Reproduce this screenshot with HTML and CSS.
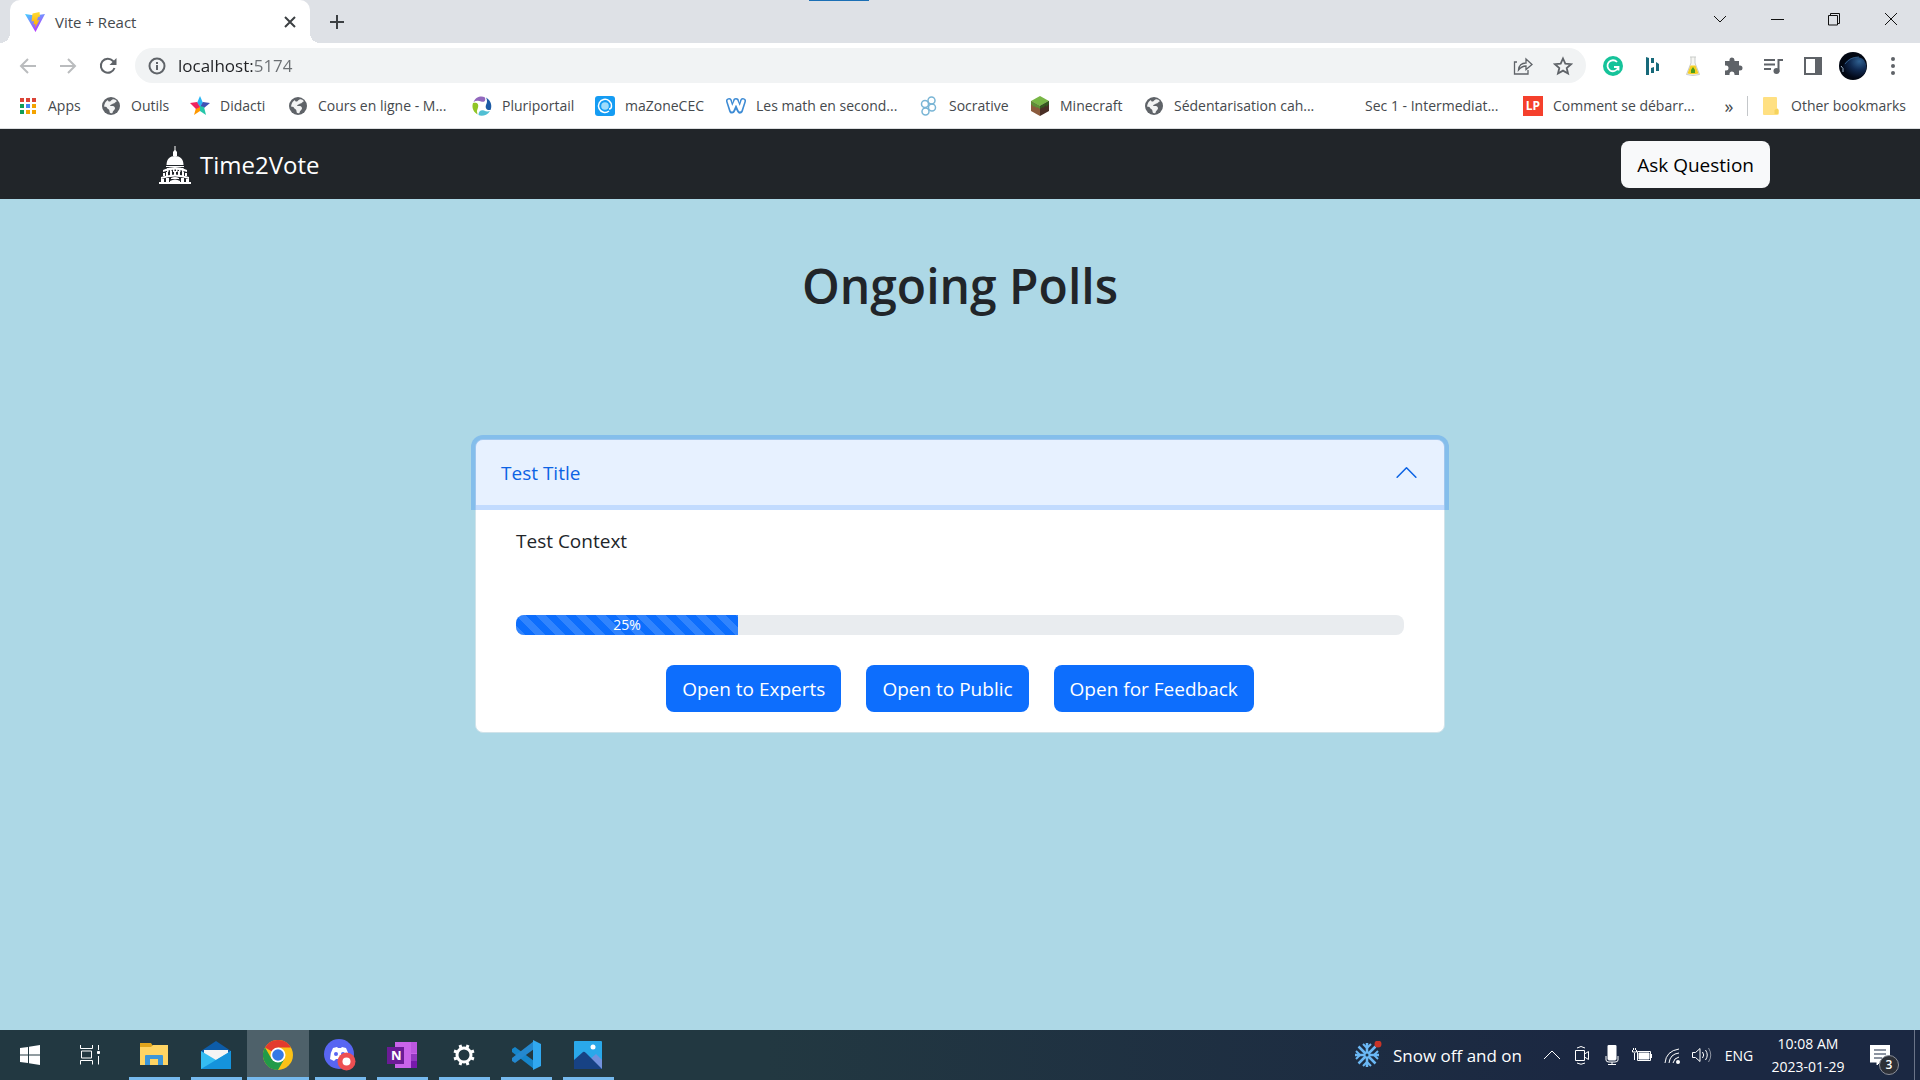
FILE: index.html
```
<!DOCTYPE html>
<html lang="en">
<head>
    <meta charset="UTF-8">
    <meta name="viewport" content="width=device-width, initial-scale=1.0">
    <title>Vite + React</title>
    <link rel="stylesheet" href="styles.css">
</head>
<body>
    <!-- Shared icons -->
    <svg class="sprite" aria-hidden="true">
        <symbol id="globe" viewBox="0 0 20 20">
            <circle cx="10" cy="10" r="9" fill="#5f6368"/>
            <path d="M11.500 3.500C13 3 15 4 16 5.500C14 5.500 14.500 7.500 12 7.500C11 9 9.500 8 9 10C11 10 13.500 9.500 14 12C14 14 12 14 11.500 17C9.500 17.500 8.500 17 8.500 15C8.500 13 6 13 5.500 11L3 10.500C3.500 7 5 5 7 4C7 6 9.500 6 10 4.500Z" fill="#fff" opacity=".92"/>
        </symbol>
    </svg>

    <!-- Tab strip -->
    <header class="tab-strip">
        <span class="drag-hint"></span>
        <div class="tab">
            <svg width="20" height="20" viewBox="0 0 20 20">
                <defs>
                    <linearGradient id="viteBack" x1="0" y1="0" x2=".6" y2="1"><stop stop-color="#41d1ff"/><stop offset="1" stop-color="#bd34fe"/></linearGradient>
                    <linearGradient id="viteBolt" x1="0" y1="0" x2="0" y2="1"><stop stop-color="#ffdd35"/><stop offset="1" stop-color="#ffa800"/></linearGradient>
                </defs>
                <path d="M0 2L10 3.500L20 2L10.500 20Z" fill="url(#viteBack)"/>
                <path d="M14.500 0L7.500 1.500L6.500 9.500L9 9L8.500 12.500L10.500 12L10 16L14.500 8L12 8.500L13 5L15 4.500Z" fill="url(#viteBolt)"/>
            </svg>
            <span class="tab-title">Vite + React</span>
            <button class="icon-button" aria-label="Close tab">
                <svg width="12" height="12" viewBox="0 0 12 12"><path d="M1 1L11 11M11 1L1 11" stroke="#3c4043" stroke-width="2"/></svg>
            </button>
        </div>
        <button class="icon-button new-tab" aria-label="New tab">
            <svg width="16" height="16" viewBox="0 0 16 16"><path d="M8 1V15M1 8H15" stroke="#3c4043" stroke-width="2"/></svg>
        </button>
        <div class="window-buttons">
            <button aria-label="Search tabs"><svg width="14" height="14" viewBox="0 0 14 14"><path d="M1 4L7 10L13 4"/></svg></button>
            <button aria-label="Minimize"><svg width="14" height="14" viewBox="0 0 14 14"><path d="M1 7.500H14"/></svg></button>
            <button aria-label="Restore"><svg width="14" height="14" viewBox="0 0 14 14"><path d="M1.500 3.500H10.500V13H1.500ZM3.500 3.500V1.500H12.500V11.500H10.500"/></svg></button>
            <button aria-label="Close"><svg width="14" height="14" viewBox="0 0 14 14"><path d="M1 1L13 13M13 1L1 13"/></svg></button>
        </div>
    </header>

    <!-- Address bar -->
    <div class="toolbar">
        <button class="tool" aria-label="Back"><svg width="18" height="18" viewBox="0 0 18 18"><path d="M17 9H2M9 2L2 9L9 16" fill="none" stroke="#babcbe" stroke-width="2"/></svg></button>
        <button class="tool" aria-label="Forward"><svg width="18" height="18" viewBox="0 0 18 18"><path d="M1 9H16M9 2L16 9L9 16" fill="none" stroke="#babcbe" stroke-width="2"/></svg></button>
        <button class="tool" aria-label="Reload"><svg width="20" height="20" viewBox="0 0 20 20"><path d="M16.500 12A7 7 0 1 1 15 5L17 7" fill="none" stroke="#5f6368" stroke-width="2"/><path d="M18.500 2V9H11.500Z" fill="#5f6368"/></svg></button>
        <div class="omnibox">
            <svg width="18" height="18" viewBox="0 0 18 18"><circle cx="9" cy="9" r="7.500" fill="none" stroke="#5f6368" stroke-width="2"/><path d="M9 8V13M9 5V7" stroke="#5f6368" stroke-width="2"/></svg>
            <input class="url" type="text" value="localhost:5174" aria-label="Address">
            <button class="icon-button" aria-label="Share"><svg width="20" height="20" viewBox="0 0 20 20"><path d="M4 6H1.500V18H15V14M5.500 14C6 9 9 7 13 7V3L19 8.500L13 13.500V10C10 10 8 11 5.500 14Z" fill="none" stroke="#5f6368" stroke-width="1.300"/></svg></button>
            <button class="icon-button" aria-label="Bookmark"><svg width="20" height="20" viewBox="0 0 20 20"><path d="M10 2.500L12.300 7.700L18 8.200L13.700 12L15 17.500L10 14.600L5 17.500L6.300 12L2 8.200L7.700 7.700Z" fill="none" stroke="#5f6368" stroke-width="1.800"/></svg></button>
        </div>
        <button class="tool" aria-label="Grammarly"><svg width="20" height="20" viewBox="0 0 20 20"><circle cx="10" cy="10" r="10" fill="#15c39a"/><path d="M14 6A5.500 5.500 0 1 0 15 12M11 11H15.500V14.500" fill="none" stroke="#fff" stroke-width="1.800"/></svg></button>
        <button class="tool" aria-label="Extension"><svg width="20" height="20" viewBox="0 0 20 20"><path d="M3 1L6 2V19H3ZM8 2H11V7H8ZM8 12L11 11V17H8ZM13 6L16 8V15H13Z" fill="#17697a"/></svg></button>
        <button class="tool" aria-label="Lab flask"><svg width="20" height="20" viewBox="0 0 20 20"><path d="M7 1H13M8 1V7L3.500 18.500Q10 20.500 16.500 18.500L12 7V1" fill="#f6f6f2" stroke="#c9ccc9"/><path d="M7.500 9.500H12.500L15.500 17.500Q10 19 4.500 17.500Z" fill="#f6cf22"/><path d="M8 17V14L10 11L12 14V17Z" fill="#4a9d1c"/></svg></button>
        <button class="tool" aria-label="Extensions"><svg width="20" height="20" viewBox="0 0 20 20"><path d="M2 5H6.500V4A2.500 2.500 0 0 1 11.500 4V5H16V9.500H17A2.500 2.500 0 0 1 17 14.500H16V19H11.500V18A2.500 2.500 0 0 0 6.500 18V19H2V14.500H3A2.500 2.500 0 0 0 3 9.500H2Z" fill="#5f6368"/></svg></button>
        <button class="tool" aria-label="Media"><svg width="20" height="20" viewBox="0 0 20 20"><path d="M1 4H12M1 8.500H12M1 13H8M15.500 16V4H20" fill="none" stroke="#5f6368" stroke-width="2"/><circle cx="13.500" cy="15" r="3" fill="#5f6368"/></svg></button>
        <button class="tool" aria-label="Side panel"><svg width="20" height="20" viewBox="0 0 20 20"><path d="M2 2H18V18H2Z" fill="none" stroke="#5f6368" stroke-width="2"/><path d="M12 2H18V18H12Z" fill="#5f6368"/></svg></button>
        <button class="tool" aria-label="Profile"><svg width="28" height="28" viewBox="0 0 28 28"><defs><radialGradient id="planet" cx=".7" cy=".2" r=".8"><stop stop-color="#2f6090"/><stop offset=".5" stop-color="#102a52"/><stop offset="1" stop-color="#020817"/></radialGradient></defs><circle cx="14" cy="14" r="14" fill="#020712"/><path d="M4 14C8 6 18 2 25 8Q29 14 26 21Q21 28 12 26Q3 22 4 14Z" fill="url(#planet)"/><path d="M2 14Q5 16 4 20" fill="none" stroke="#9fb8d0"/><path d="M6 12Q11 5 20 5" fill="none" stroke="#315a83"/></svg></button>
        <button class="tool" aria-label="Menu"><svg width="20" height="20" viewBox="0 0 20 20" fill="#5f6368"><circle cx="10" cy="3" r="2"/><circle cx="10" cy="10" r="2"/><circle cx="10" cy="17" r="2"/></svg></button>
    </div>

    <!-- Bookmarks -->
    <nav class="bookmarks">
        <div class="bookmark-list">
            <a href="#"><svg width="20" height="20" viewBox="0 0 20 20"><path d="M2 2H6V6H2ZM8 2H12V6H8ZM14 2H18V6H14Z" fill="#db4437"/><path d="M2 8H6V12H2ZM2 14H6V18H2Z" fill="#0f9d58"/><path d="M8 8H12V12H8Z" fill="#4285f4"/><path d="M14 8H18V12H14ZM8 14H12V18H8ZM14 14H18V18H14Z" fill="#f4a300"/></svg>Apps</a>
            <a href="#"><svg width="20" height="20"><use href="#globe"/></svg>Outils</a>
            <a href="#"><svg width="20" height="20" viewBox="0 0 20 20"><path d="M10 0L13 7L10 11L7 7Z" fill="#29b6f6"/><path d="M20 7L14 12L10 11L13 6Z" fill="#3f51b5"/><path d="M16 19L10 15V10L14 11Z" fill="#26c6a9"/><path d="M4 19L6 12L10 10V15Z" fill="#ff9800"/><path d="M0 7L7 6L10 11L6 13Z" fill="#ef245f"/></svg>Didacti</a>
            <a href="#"><svg width="20" height="20"><use href="#globe"/></svg>Cours en ligne - M...</a>
            <a href="#"><svg width="20" height="20" viewBox="0 0 20 20"><path d="M1.500 6C4 0 10-.5 13 1.500C14 5 12 6.500 9 5.500Q5 4 1.500 6Z" fill="#9268bd"/><path d="M14 1.500C20 5 20 11 18.500 14C14.500 14.500 13 12 14 9Q16 5 14 1.500Z" fill="#1c5ba5"/><path d="M18 15C15 20 9 20.500 6.500 19C6.500 15 9 13.500 12 14.500Q15 16 18 15Z" fill="#50bfd3"/><path d="M5.500 18.500C0 15 0 10 1 7C5 6 7 8 6 11.500Q4 15 5.500 18.500Z" fill="#91c526"/></svg>Pluriportail</a>
            <a href="#"><svg width="20" height="20" viewBox="0 0 20 20"><rect width="20" height="20" rx="3" fill="#159cf3"/><path d="M14 15A6.500 6.500 0 1 1 16.500 10Q16.500 13 14 13" fill="none" stroke="#fff" stroke-width="1.500"/><circle cx="10" cy="10" r="3.800" fill="#9fdcfb"/></svg>maZoneCEC</a>
            <a href="#"><svg width="20" height="20" viewBox="0 0 20 20"><path d="M3 5L6 14.500L10 7L14 14.500L17 5M10 5V8" fill="none" stroke="#3d8bd4" stroke-width="6" stroke-linecap="round" stroke-linejoin="round"/><path d="M3 5L6 14L10 5L14 14L17 5" fill="none" stroke="#fff" stroke-width="3" stroke-linecap="round" stroke-linejoin="round"/></svg>Les math en second...</a>
            <a href="#"><svg width="20" height="20" viewBox="0 0 20 20"><g fill="none" stroke="#79b5d5" stroke-width="1.500"><circle cx="12.500" cy="4.500" r="3.500"/><circle cx="6" cy="8" r="3.500"/><circle cx="13" cy="11.500" r="3.500"/><circle cx="6.500" cy="15.500" r="3.500"/></g></svg>Socrative</a>
            <a href="#"><svg width="20" height="20" viewBox="0 0 20 20"><path d="M1 5L10 0L19 5L10 10Z" fill="#78b646"/><path d="M1 5L10 10V20L1 15Z" fill="#8b5b3d"/><path d="M19 5L10 10V20L19 15Z" fill="#492f25"/><path d="M1 5L10 10V13L7 11V12L4 10V11L1 8Z" fill="#5d8f37"/><path d="M19 5L10 10V13L13 11V12L16 9V11L19 8Z" fill="#34591f"/></svg>Minecraft</a>
            <a href="#"><svg width="20" height="20"><use href="#globe"/></svg>Sédentarisation cah...</a>
            <a href="#"><svg width="20" height="20"></svg>Sec 1 - Intermediat...</a>
            <a href="#"><span class="lp-icon">LP</span>Comment se débarr...</a>
        </div>
        <button class="icon-button overflow" aria-label="More bookmarks">»</button>
        <a class="other" href="#"><svg width="20" height="20" viewBox="0 0 20 20"><path d="M2 2Q2 1 3 1H15Q16 1 16 2V12L18 14V17Q18 19 16 19H3Q2 19 2 18Z" fill="#ffe082"/><path d="M13.500 18V14.500Q13.500 13 15.500 13H17V18Z" fill="#f5d35d"/></svg>Other bookmarks</a>
    </nav>

    <!-- App navbar -->
    <nav class="navbar">
        <div class="navbar-inner">
            <a class="brand" href="#">
                <svg width="34" height="38" viewBox="0 0 34 38" fill="#fff">
                    <path d="M16.500 0H17.500V4L19 6V10H15V6L16.500 4Z"/>
                    <path d="M8.500 19C8.500 13 12 10 17 10S25.500 13 25.500 19Z"/>
                    <path d="M8 20H26V21H8ZM9 22H10.500V26H9ZM12 22H13.500V26H12ZM15 22H16.500V26H15ZM18 22H19.500V26H18ZM21 22H22.500V26H21ZM24 22H25.500V26H24Z"/>
                    <path d="M5 24Q17 18 29 24V26Q17 21 5 26ZM5 27H7V30H5ZM8 26H10V30H8ZM12 25H14V29H12ZM16 25H18V29H16ZM20 25H22V29H20ZM24 26H26V30H24ZM27 27H29V30H27Z"/>
                    <path d="M3 31Q17 26 31 31V33Q17 28 3 33ZM3 33H6V36H3ZM8 32H11V36H8ZM13 32Q17 30 21 32V33H13ZM23 32H26V36H23ZM28 33H31V36H28ZM12 35Q17 32 22 35V36H12ZM1 36H33V38H1Z"/>
                </svg>
                Time2Vote
            </a>
            <button class="btn btn-light">Ask Question</button>
        </div>
    </nav>

    <main>
        <h1>Ongoing Polls</h1>

        <section class="accordion">
            <button class="accordion-button" aria-expanded="true" aria-controls="poll1">
                Test Title
                <svg width="25" height="25" viewBox="0 0 16 16"><path d="M2 11L8 5L14 11" fill="none" stroke="#0c63e4" stroke-linecap="round" stroke-linejoin="round"/></svg>
            </button>
            <div class="accordion-body" id="poll1">
                <p>Test Context</p>
                <div class="progress" role="progressbar" aria-label="Votes" aria-valuenow="25" aria-valuemin="0" aria-valuemax="100">
                    <div class="progress-bar" style="width: 25%;">25%</div>
                </div>
                <div class="actions">
                    <button class="btn btn-primary">Open to Experts</button>
                    <button class="btn btn-primary">Open to Public</button>
                    <button class="btn btn-primary">Open for Feedback</button>
                </div>
            </div>
        </section>
    </main>

    <!-- Taskbar -->
    <footer class="taskbar">
        <button class="task" aria-label="Start"><svg width="20" height="20" viewBox="0 0 20 20" fill="#fff"><path d="M0 3L8 2V9.500H0ZM9 1.800L20 0V9.500H9ZM0 10.500H8V18L0 17ZM9 10.500H20V20L9 18.200Z"/></svg></button>
        <button class="task" aria-label="Task view"><svg width="20" height="20" viewBox="0 0 20 20" fill="none" stroke="#fff"><path d="M.5 0V3.500H12.500V0M.5 19.500V15.500H12.500V19.500M1.500 6H11.500V13H1.500ZM18.500 0V5M18.500 11V19.500"/><path d="M17.500 6.500H19.500V8.500H17.500Z" fill="#fff"/></svg></button>
        <button class="task open" aria-label="File Explorer"><svg width="30" height="30" viewBox="0 0 30 30"><path d="M1 3H12L14 6H28V25H1Z" fill="#e0a51d"/><path d="M1 7H12L14 5H29V25H1Z" fill="#ffd463"/><path d="M6 25V16Q6 15 7 15H23Q24 15 24 16V25H19V19H11V25Z" fill="#3d96d8"/></svg></button>
        <button class="task open" aria-label="Mail"><svg width="30" height="30" viewBox="0 0 30 30"><path d="M0 11L15 1L30 11V18H0Z" fill="#0d5ca8"/><path d="M3 10H27V20H3Z" fill="#f4f4f4"/><path d="M0 11L15 20L30 11V29H0Z" fill="#35bdf2"/><path d="M0 29L30 11V29Z" fill="#1593dc"/></svg></button>
        <button class="task open active" aria-label="Chrome"><svg width="30" height="30" viewBox="0 0 30 30"><circle cx="15" cy="15" r="15" fill="#fbc116"/><path d="M15 15L2 7.500A15 15 0 0 1 28 7.500H15Z" fill="#e33b2e"/><path d="M2 7.500A15 15 0 0 0 15 30L21.500 18.700L8.500 18.700Z" fill="#229a48"/><circle cx="15" cy="15" r="7.500" fill="#fff"/><circle cx="15" cy="15" r="5.800" fill="#3479e5"/></svg></button>
        <button class="task open" aria-label="Discord"><svg width="32" height="32" viewBox="0 0 32 32"><circle cx="15" cy="15" r="15" fill="#5865f2"/><path d="M9 9L13 8L14 9H17L18 8L22 9Q25 14 25 20L21 22L19 20H12L10 22L6 20Q6 14 9 9Z" fill="#fff"/><circle cx="12" cy="15" r="2" fill="#5865f2"/><circle cx="19" cy="15" r="2" fill="#5865f2"/><circle cx="22.500" cy="22.500" r="9" fill="#ed4f52"/><circle cx="22.500" cy="22.500" r="4" fill="#fff"/></svg></button>
        <button class="task open" aria-label="OneNote"><svg width="30" height="30" viewBox="0 0 30 30"><path d="M8 2H30V28H8Z" fill="#ca64ea"/><path d="M24 2H30V13H24Z" fill="#bb57df"/><path d="M24 14H30V21H24Z" fill="#9138bf"/><path d="M24 21H30V28H24Z" fill="#7719aa"/><rect y="7" width="17" height="17" fill="#6b1b96"/><text x="4" y="20" fill="#fff" font-family="Open Sans" font-size="13" font-weight="700">N</text></svg></button>
        <button class="task open" aria-label="Settings"><svg width="24" height="24" viewBox="0 0 24 24" fill="none" stroke="#fff"><circle cx="12" cy="12" r="7" stroke-width="3"/><path d="M15 5L16 2M9 19L8 22M5 9L2 8M19 15L22 16M9 5L8 2M15 19L16 22M5 15L2 16M19 9L22 8" stroke-width="3"/></svg></button>
        <button class="task open" aria-label="VS Code"><svg width="30" height="30" viewBox="0 0 30 30"><path d="M1 9L4 7L23 21V29L1 12Z" fill="#1685ca"/><path d="M1 21L4 23L23 9V1L1 18Z" fill="#2488cf"/><path d="M22 0L30 4V26L22 30Z" fill="#31a8f0"/></svg></button>
        <button class="task open" aria-label="Photos"><svg width="28" height="28" viewBox="0 0 28 28"><rect width="28" height="28" rx="1" fill="#2aa8ea"/><path d="M14 20L22 13L28 19V28H14Z" fill="#7291dd"/><path d="M0 19L9 11Q10 10 12 12L28 28H0Z" fill="#174284"/><circle cx="19" cy="6" r="2.500" fill="#fff"/></svg></button>

        <div class="tray">
            <button class="weather">
                <svg width="28" height="28" viewBox="0 0 28 28"><g fill="none" stroke="#6bb8f5" stroke-width="2.500"><path d="M13 2V26M1 14H25M4.500 5.500L21.500 22.500M21.500 5.500L4.500 22.500"/><path d="M9 3L13 7L17 3M9 25L13 21L17 25M2 10L6 14L2 18M24 10L20 14L24 18" stroke-width="2"/></g><circle cx="13" cy="14" r="3" fill="#6bb8f5"/><circle cx="13" cy="14" r="1.500" fill="#1d3446"/><circle cx="24" cy="3" r="3.500" fill="#c93427"/></svg>
                Snow off and on
            </button>
            <button aria-label="Hidden icons"><svg width="20" height="20" viewBox="0 0 20 20"><path d="M2 14L10 6L18 14"/></svg></button>
            <button aria-label="Meet now"><svg width="20" height="20" viewBox="0 0 20 20"><path d="M3.500 5.500H12.500V15.500H3.500ZM12.500 9L16.500 6.500V14.500L12.500 12M5 3Q9 0 13 3M5 18Q9 20.500 13 18"/></svg></button>
            <button aria-label="Microphone"><svg width="20" height="20" viewBox="0 0 20 20"><rect x="6" y="0" width="8" height="15" rx="1" fill="#fff"/><path d="M4 11V15Q4 17 7 17H13Q16 17 16 15V11M10 17V19.500M6 19.500H14"/></svg></button>
            <button aria-label="Battery"><svg width="20" height="20" viewBox="0 0 20 20"><path d="M5.500 6.500H18.500V15.500H5.500ZM19.500 9V13M.5 5V7H4.500V5M1.500 3V5M3.500 3V5M2.500 8V15"/><path d="M7 8H17V14H7Z" fill="#fff"/></svg></button>
            <button aria-label="Wi-Fi"><svg width="20" height="20" viewBox="0 0 20 20"><path d="M3 18Q4 6 17 4M7 18Q8 9 17 8M11 18Q12 13 17 12"/><circle cx="16" cy="17" r="2" fill="#fff" stroke="none"/></svg></button>
            <button aria-label="Volume"><svg width="20" height="20" viewBox="0 0 20 20"><path d="M.5 7.500H3.500L8 3.500V16.500L3.500 12.500H.5ZM10.500 7Q13 10 10.500 13M13.500 5Q17 10 13.500 15"/><path d="M16.500 3Q21 10 16.500 17" opacity=".5"/></svg></button>
            <button class="language">ENG</button>
            <button class="clock"><span>10:08 AM</span><span>2023-01-29</span></button>
            <button class="notifications" aria-label="Notifications">
                <svg width="20" height="20" viewBox="0 0 20 20" stroke="none"><path d="M0 0H20V17H10L7 20V17H0Z" fill="#fff"/><path d="M4 5H16M4 9H16M4 13H12" stroke="#1b2842"/></svg>
                <span class="badge">3</span>
            </button>
        </div>
    </footer>
</body>
</html>
```
FILE: styles.css
```
* {
    box-sizing: border-box;
}

body {
    margin: 0;
    min-height: 100vh;
    display: flex;
    flex-direction: column;
    font-family: "Open Sans", "Noto Sans", sans-serif;
    font-size: 19px;
    line-height: 30px;
    color: #212529;
    background-color: #add8e6;
}

button {
    font-family: inherit;
    margin: 0;
    padding: 0;
    border: none;
    background: none;
    color: inherit;
    cursor: pointer;
}

a {
    color: inherit;
    text-decoration: none;
}

svg {
    display: block;
    flex-shrink: 0;
}

.sprite {
    position: absolute;
    width: 0;
    height: 0;
}

.icon-button {
    width: 20px;
    height: 20px;
    display: flex;
    align-items: center;
    justify-content: center;
}

/* Tab strip */
.tab-strip {
    position: relative;
    display: flex;
    height: 43px;
    padding-left: 10px;
    background-color: #dee1e6;
}

.drag-hint {
    position: absolute;
    top: 0;
    left: 809px;
    width: 60px;
    height: 1px;
    background-color: #1b6fb5;
}

.tab {
    position: relative;
    display: flex;
    align-items: center;
    gap: 10px;
    width: 300px;
    padding: 0 10px 0 15px;
    border-radius: 10px 10px 0 0;
    background-color: #fff;
}

.tab::before,
.tab::after {
    content: "";
    position: absolute;
    bottom: 0;
    width: 10px;
    height: 10px;
}

.tab::before {
    right: 100%;
    background: radial-gradient(circle at 0 0, transparent 10px, #fff 10px);
}

.tab::after {
    left: 100%;
    background: radial-gradient(circle at 100% 0, transparent 10px, #fff 10px);
}

.tab-title {
    flex: 1;
    font-size: 15px;
    color: #45494d;
}

.new-tab {
    height: auto;
    margin-left: 17px;
}

.window-buttons {
    display: flex;
    height: 37px;
    margin-left: auto;
    margin-right: 1px;
}

.window-buttons button {
    display: flex;
    align-items: center;
    justify-content: center;
    width: 57px;
}

.window-buttons svg {
    fill: none;
    stroke: #111;
}

/* Address bar */
.toolbar {
    display: flex;
    align-items: center;
    height: 45px;
    padding: 0 7px 0 8px;
    background-color: #fff;
}

.tool {
    display: flex;
    align-items: center;
    justify-content: center;
    width: 40px;
    height: 40px;
}

.omnibox {
    flex: 1;
    display: flex;
    align-items: center;
    gap: 20px;
    height: 35px;
    margin: 0 7px;
    padding: 0 13px;
    border-radius: 18px;
    background-color: #f1f3f4;
}

.url {
    flex: 1;
    min-width: 0;
    margin-left: -8px;
    padding: 0;
    border: none;
    outline: none;
    font-family: inherit;
    font-size: 17px;
    color: transparent;
    background: linear-gradient(to right, #202124 75px, #6b6f73 75px);
    background-clip: text;
    -webkit-background-clip: text;
}

/* Bookmarks */
.bookmarks {
    display: flex;
    align-items: center;
    height: 41px;
    padding: 0 14px 4px 18px;
    border-bottom: 1px solid #dcdee0;
    background-color: #fff;
    font-size: 14px;
    line-height: 20px;
    color: #45494d;
}

.bookmark-list {
    display: grid;
    grid-template-columns: 83px 89px 98px 184px 123px 131px 193px 111px 114px 191px 188px auto;
}

.bookmarks a {
    display: flex;
    align-items: center;
    gap: 10px;
    white-space: nowrap;
}

.lp-icon {
    width: 20px;
    height: 20px;
    background-color: #f5402c;
    color: #fff;
    font-size: 12px;
    font-weight: 700;
    text-align: center;
}

.overflow {
    margin-left: auto;
    font-size: 18px;
    line-height: 16px;
}

.other {
    margin-left: 8px;
    padding-left: 13px;
    border-left: 1px solid #c4c7ca;
}

/* App navbar */
.navbar {
    padding: 12px 0 11px;
    background-color: #212529;
}

.navbar-inner {
    display: flex;
    align-items: center;
    justify-content: space-between;
    max-width: 1650px;
    margin: 0 auto;
    padding: 0 15px;
}

.brand {
    display: flex;
    align-items: center;
    gap: 8px;
    padding-left: 8px;
    font-size: 24px;
    color: #fff;
}

.btn {
    height: 47px;
    padding: 0 16px;
    border-radius: 8px;
    font-size: 19px;
}

.btn-light {
    background-color: #f8f9fa;
    color: #000;
}

.btn-primary {
    background-color: #0d6efd;
    color: #fff;
}

main {
    flex: 1;
    width: 100%;
    max-width: 970px;
    margin: 0 auto;
}

h1 {
    margin: 57px 0 123px;
    font-size: 48px;
    font-weight: 600;
    line-height: 60px;
    text-align: center;
}

/* Poll accordion */
.accordion {
    border: 1px solid #d0e3ea;
    border-radius: 8px;
    background-color: #fff;
}

.accordion-button {
    position: relative;
    display: flex;
    align-items: center;
    justify-content: space-between;
    width: 100%;
    height: 65px;
    padding: 0 25px;
    border-radius: 7px 7px 0 0;
    background-color: #e7f1ff;
    box-shadow: 0 0 0 5px rgba(13, 110, 253, 0.25);
    color: #0c63e4;
    font-size: 19px;
}

.accordion-body {
    padding: 21px 40px 20px;
}

.accordion-body p {
    margin: 0 0 59px;
}

.progress {
    height: 20px;
    border-radius: 8px;
    background-color: #e9ecef;
    overflow: hidden;
}

.progress-bar {
    height: 100%;
    background-color: #0d6efd;
    background-image: linear-gradient(45deg, rgba(255, 255, 255, 0.15) 25%, transparent 25%, transparent 50%, rgba(255, 255, 255, 0.15) 50%, rgba(255, 255, 255, 0.15) 75%, transparent 75%, transparent);
    background-size: 20px 20px;
    color: #fff;
    font-size: 14px;
    line-height: 20px;
    text-align: center;
}

.actions {
    display: flex;
    justify-content: center;
    gap: 25px;
    margin-top: 30px;
}

/* Taskbar */
.taskbar {
    display: flex;
    height: 50px;
    background: linear-gradient(to right, #223841 0, #223841 40%, #1b2842 82%);
    color: #fff;
}

.task {
    position: relative;
    display: flex;
    align-items: center;
    justify-content: center;
    width: 62px;
}

.task:first-child {
    width: 60px;
}

.task:nth-child(2) {
    width: 60px;
    margin-right: 3px;
}

.open::after {
    content: "";
    position: absolute;
    bottom: 0;
    left: 6px;
    right: 5px;
    height: 3px;
    background-color: #76b9ed;
}

.active {
    background-color: #4e616a;
}

.active::after {
    left: 0;
    right: 0;
}

.tray {
    display: flex;
    align-items: center;
    margin-left: auto;
    margin-right: 5px;
    padding-right: 15px;
    border-right: 1px solid #6b7488;
}

.tray button {
    display: flex;
    align-items: center;
    justify-content: center;
    width: 30px;
    height: 50px;
}

.tray svg {
    fill: none;
    stroke: #fff;
}

.tray .weather {
    gap: 11px;
    width: auto;
    margin-right: 15px;
    font-size: 17px;
}

.weather svg {
    stroke: none;
}

.tray .language {
    width: 44px;
    font-size: 14px;
}

.tray .clock {
    flex-direction: column;
    width: 94px;
    font-size: 14px;
    line-height: 23px;
}

.tray .notifications {
    position: relative;
    width: 38px;
    margin-left: 6px;
}

.badge {
    position: absolute;
    top: 25px;
    right: 0;
    width: 20px;
    height: 20px;
    border: 1px solid #8b8f98;
    border-radius: 50%;
    background-color: #2d3037;
    font-size: 12px;
    font-weight: 600;
    line-height: 18px;
    text-align: center;
}
```
